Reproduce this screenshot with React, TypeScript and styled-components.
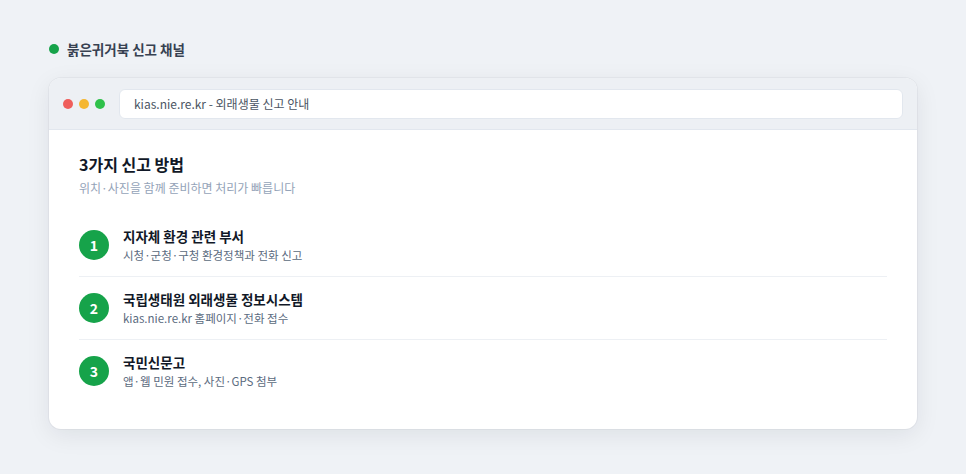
import styled, { createGlobalStyle } from "styled-components";

const GlobalStyle = createGlobalStyle`
  html, body {
    margin: 0;
    padding: 0;
    background: #eff2f6;
  }
  body {
    font-family: "Noto Sans CJK KR", "Noto Sans", sans-serif;
    -webkit-font-smoothing: antialiased;
  }
`;

const Page = styled.div`
  width: 966px;
  height: 474px;
  box-sizing: border-box;
  padding: 39px 49px 0;
  background: #eff2f6;
`;

const SectionLabel = styled.div`
  display: flex;
  align-items: center;
  gap: 8px;
  height: 20px;
  margin-bottom: 19px;
  font-size: 13.5px;
  font-weight: 700;
  color: #374151;
`;

const Dot = styled.span<{ $color: string; $size?: number }>`
  width: ${(p) => p.$size ?? 10}px;
  height: ${(p) => p.$size ?? 10}px;
  border-radius: 50%;
  background: ${(p) => p.$color};
  flex-shrink: 0;
`;

const BrowserWindow = styled.div`
  background: #ffffff;
  border-radius: 12px;
  overflow: hidden;
  box-shadow: 0 0 0 1px rgba(15, 23, 42, 0.04), 0 6px 24px rgba(15, 23, 42, 0.08);
`;

const TopBar = styled.div`
  display: flex;
  align-items: center;
  gap: 6px;
  height: 52px;
  box-sizing: border-box;
  padding: 0 14px;
  background: #edf0f4;
  border-bottom: 1px solid #e2e7ee;
`;

const Dots = styled.div`
  display: flex;
  gap: 6px;
  margin-right: 8px;
`;

const AddressBar = styled.div`
  flex: 1;
  height: 30px;
  box-sizing: border-box;
  display: flex;
  align-items: center;
  padding: 0 14px;
  background: #ffffff;
  border: 1px solid #e2e7ee;
  border-radius: 6px;
  font-size: 12px;
  color: #4b5563;
`;

const Body = styled.div`
  padding: 23px 30px 27px;
`;

const Title = styled.div`
  font-size: 16px;
  line-height: 22px;
  font-weight: 700;
  color: #111827;
`;

const Subtitle = styled.div`
  margin-top: 4px;
  font-size: 12px;
  line-height: 18px;
  color: #94a3b8;
`;

const List = styled.div`
  margin-top: 17px;
  display: flex;
  flex-direction: column;
`;

const Item = styled.div<{ $last?: boolean }>`
  display: flex;
  align-items: center;
  gap: 14px;
  padding: 12px 0;
  border-bottom: ${(p) => (p.$last ? "none" : "1px solid #edf0f4")};
`;

const Badge = styled.div`
  width: 30px;
  height: 30px;
  border-radius: 50%;
  background: #16a34a;
  color: #ffffff;
  display: flex;
  align-items: center;
  justify-content: center;
  font-size: 14px;
  font-weight: 700;
  flex-shrink: 0;
`;

const ItemText = styled.div`
  display: flex;
  flex-direction: column;
`;

const ItemTitle = styled.div`
  font-size: 13.5px;
  line-height: 20px;
  font-weight: 700;
  color: #111827;
`;

const ItemDesc = styled.div`
  font-size: 11.5px;
  line-height: 18px;
  color: #5b6b80;
`;

const channels = [
  { title: "지자체 환경 관련 부서", desc: "시청·군청·구청 환경정책과 전화 신고" },
  { title: "국립생태원 외래생물 정보시스템", desc: "kias.nie.re.kr 홈페이지·전화 접수" },
  { title: "국민신문고", desc: "앱·웹 민원 접수, 사진·GPS 첨부" },
];

export default function App() {
  return (
    <Page>
      <GlobalStyle />
      <SectionLabel>
        <Dot $color="#16a34a" />
        붉은귀거북 신고 채널
      </SectionLabel>
      <BrowserWindow>
        <TopBar>
          <Dots>
            <Dot $color="#ef5e5b" />
            <Dot $color="#f5b731" />
            <Dot $color="#2fc14a" />
          </Dots>
          <AddressBar>kias.nie.re.kr - 외래생물 신고 안내</AddressBar>
        </TopBar>
        <Body>
          <Title>3가지 신고 방법</Title>
          <Subtitle>위치·사진을 함께 준비하면 처리가 빠릅니다</Subtitle>
          <List>
            {channels.map((c, i) => (
              <Item key={c.title} $last={i === channels.length - 1}>
                <Badge>{i + 1}</Badge>
                <ItemText>
                  <ItemTitle>{c.title}</ItemTitle>
                  <ItemDesc>{c.desc}</ItemDesc>
                </ItemText>
              </Item>
            ))}
          </List>
        </Body>
      </BrowserWindow>
    </Page>
  );
}
